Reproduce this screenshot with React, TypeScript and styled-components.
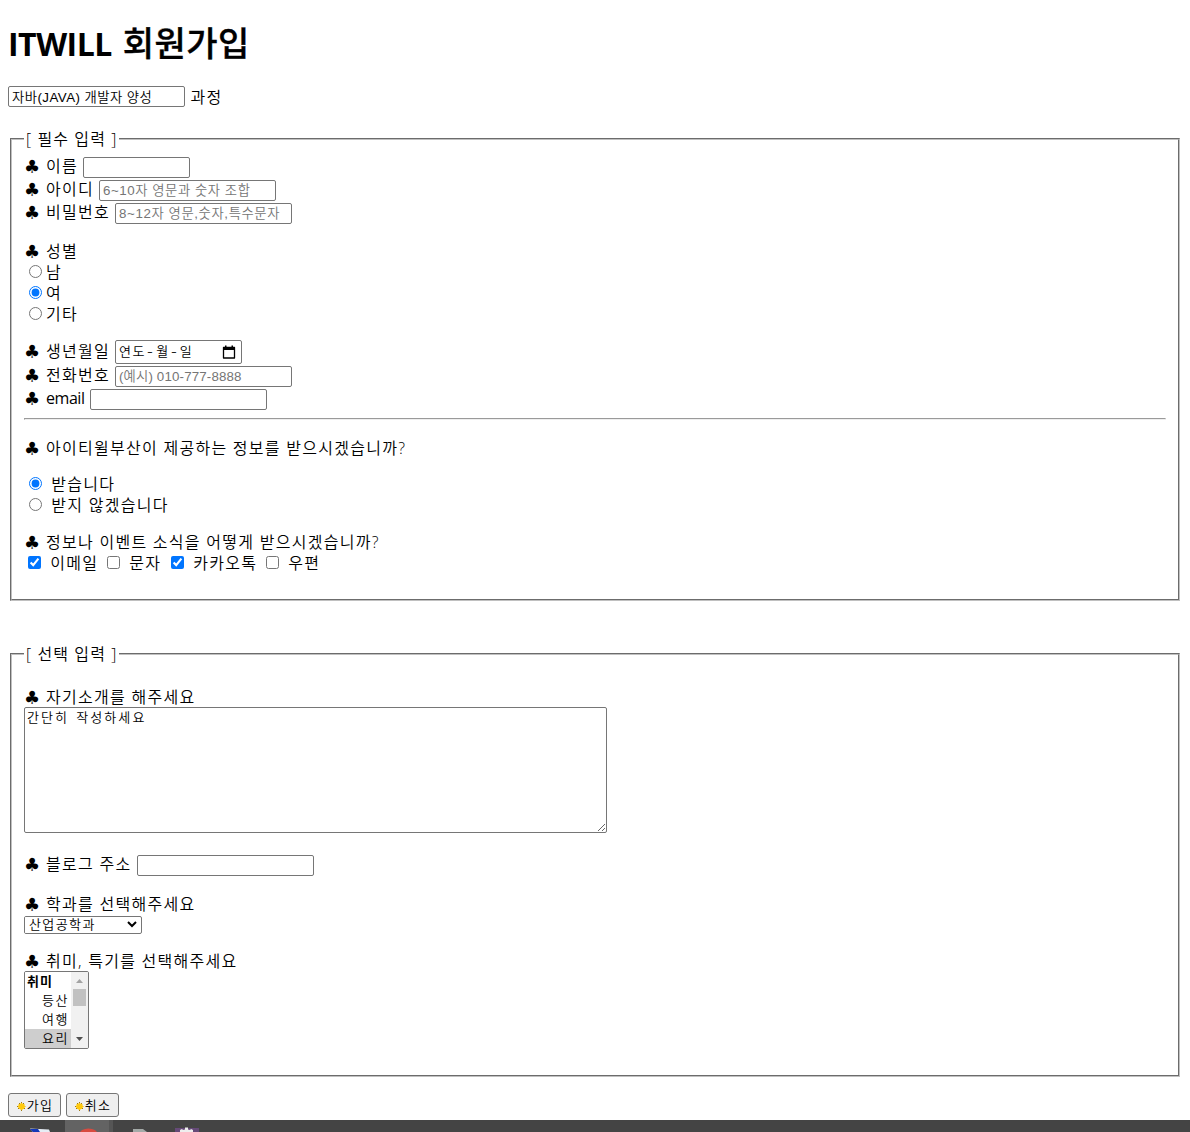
import React from "react";
import styled, { createGlobalStyle } from "styled-components";

const GlobalStyle = createGlobalStyle`
  * { box-sizing: border-box; }
  html, body { margin: 0; padding: 0; background: #fff; }
  body { overflow: hidden; }
`;

const korean = `"Noto Sans CJK KR", sans-serif`;

const Page = styled.div`
  width: 1190px;
  height: 1132px;
  display: flex;
  flex-direction: column;
  overflow: hidden;
  color: #000;
  font: 350 16px/21px "Open Sans", ${korean};
  letter-spacing: 1.28px;
  white-space: nowrap;
`;

const Form = styled.form`
  display: flex;
  flex-direction: column;
  height: 1120px;
  padding: 0 8px;
`;

const Title = styled.h1`
  height: 86px;
  margin: 0;
  padding-top: 22px;
  font: 700 32px/43px "Open Sans", ${korean};
  letter-spacing: -0.5px;
  span { margin-left: 3px; letter-spacing: 0.5px; font-size: 34px; font-weight: 500; -webkit-text-stroke: 0.4px #000; }
`;

const Row = styled.div<{ $h?: number; $gap?: number; $pad?: number }>`
  display: flex;
  align-items: center;
  height: ${(p) => p.$h ?? 21}px;
  margin-top: ${(p) => p.$gap ?? 0}px;
  padding-left: ${(p) => p.$pad ?? 0}px;
`;

const Field = styled.input<{ $w?: number; $ls?: number }>`
  width: ${(p) => p.$w ?? 177}px;
  height: 21px;
  padding: 1px 3px;
  border: 1px solid #767676;
  border-radius: 2px;
  outline: none;
  background: #fff;
  color: #000;
  font: 350 13.33px "Liberation Sans", ${korean};
  letter-spacing: ${(p) => p.$ls ?? 0}px;
  &::placeholder { color: #757575; }
`;

const Label = styled.span<{ $w?: number; $ls?: number; $up?: boolean; $latin?: boolean }>`
  flex: none;
  width: ${(p) => (p.$w ? `${p.$w}px` : "auto")};
  padding: ${(p) => (p.$up ? "0 0 2px" : "1px 0 0")};
  font-weight: ${(p) => (p.$latin ? 400 : 350)};
  letter-spacing: ${(p) => p.$ls ?? 1.28}px;
`;

const ClubMark = styled.span<{ $up?: boolean }>`
  flex: none;
  width: 22px;
  padding: ${(p) => (p.$up ? "0 0 2px" : "1px 0 0")};
  font: 18px/21px "DejaVu Sans", sans-serif;
  letter-spacing: 0;
`;

const Group = styled.fieldset<{ $gap?: number }>`
  min-width: 0;
  margin: ${(p) => p.$gap ?? 0}px 2px 0;
  padding: 0 12px 26px;
  border: 2px groove #c0c0c0;
`;

const Legend = styled.legend`
  height: 22px;
  width: 95px;
  padding: 0 2px;
  line-height: 23px;
  letter-spacing: 1.1px;
`;

const Choice = styled.input`
  flex: none;
  width: 13px;
  height: 13px;
  margin: 0 1px 0 0;
`;

const DateBox = styled.div`
  display: flex;
  align-items: center;
  justify-content: space-between;
  width: 127px;
  height: 24px;
  padding: 0 5px 0 3px;
  border: 1px solid #767676;
  border-radius: 2px;
  font: 350 13px/20px ${korean};
  letter-spacing: 1.6px;
`;

const DateParts = styled.span`
  display: flex;
  gap: 1px;
  padding-bottom: 2px;
`;

const Dash = styled.span`
  width: 8px;
  padding-left: 1px;
  transform: scaleX(1.3);
`;

const Rule = styled.hr`
  height: 2px;
  margin: 7px 0 0;
  border: 1px solid;
  border-color: #9a9a9a #eee #eee #9a9a9a;
`;

const Intro = styled.textarea`
  display: block;
  width: 583px;
  height: 126px;
  margin: 0;
  padding: 0 2px;
  border: 1px solid #767676;
  border-radius: 2px;
  outline: none;
  resize: both;
  font: 350 13px/17px ${korean};
  letter-spacing: 2.1px;
  word-spacing: 2px;
`;

const MajorFrame = styled.div`
  display: flex;
  align-items: center;
  width: 118px;
  height: 18px;
  margin-top: 2px;
  border: 1px solid #767676;
  border-radius: 2px;
  overflow: hidden;
`;

const Major = styled.select`
  flex: none;
  width: 115px;
  height: 26px;
  margin-bottom: 3px;
  padding: 0;
  border: 0;
  outline: none;
  background: #fff;
  color: #000;
  font: 350 13px ${korean};
  letter-spacing: 1.4px;
`;

const ListBox = styled.div`
  display: flex;
  width: 65px;
  height: 78px;
  border: 1px solid #767676;
  border-radius: 2px;
  overflow: hidden;
`;

const Options = styled.div`
  width: 46px;
`;

const Option = styled.div<{ $head?: boolean; $on?: boolean }>`
  height: 19px;
  padding-left: ${(p) => (p.$head ? 2 : 17)}px;
  background: ${(p) => (p.$on ? "#cecece" : "#fff")};
  font: ${(p) => (p.$head ? 700 : 350)} 13px/18px ${korean};
  letter-spacing: ${(p) => (p.$head ? 1 : 1.6)}px;
`;

const Track = styled.div`
  display: flex;
  flex-direction: column;
  align-items: center;
  width: 17px;
  background: #f1f1f1;
`;

const Thumb = styled.div`
  width: 13px;
  height: 17px;
  margin-bottom: auto;
  background: #c1c1c1;
`;

const Buttons = styled.div`
  display: flex;
  gap: 5px;
  margin-top: 16px;
`;

const Action = styled.button`
  display: flex;
  align-items: center;
  justify-content: center;
  width: 53px;
  height: 24px;
  padding: 0;
  border: 1px solid #767676;
  border-radius: 3px;
  background: #efefef;
  color: #000;
  font: 350 13px/20px ${korean};
  letter-spacing: 1.4px;
  svg { margin: 2px 1px 0 1px; }
`;

const Taskbar = styled.div`
  display: flex;
  height: 12px;
  background: #444;
`;

const TaskSlot = styled.div<{ $w: number; $active?: boolean }>`
  display: flex;
  flex: none;
  width: ${(p) => p.$w}px;
  background: ${(p) => (p.$active ? "#636363" : "transparent")};
`;

const Club = ({ up }: { up?: boolean }) => <ClubMark $up={up}>♣</ClubMark>;

const Spark = () => (
  <svg width="9" height="9" viewBox="0 0 9 9">
    <path d="M4.500.5 6 2h1.500v1.500L9 4.500 7.500 5.500V7H6L4.500 8.500 3 7H1.500V5.500L0 4.500 1.500 3.500V2H3Z" fill="#ffc90e" />
    <path d="M4 0h1v1H4ZM2 1h1v1H2ZM6 1h1v1H6ZM0 4h1v1H0ZM1 6h1v1H1ZM7 6h1v1H7ZM4 8h1v1H4Z" fill="#a07c18" />
  </svg>
);

const Calendar = () => (
  <svg width="14" height="14" viewBox="0 0 14 14">
    <path d="M1.500 2.500h11v10.500h-11Z" fill="none" stroke="#000" strokeWidth="1.3" strokeLinejoin="round" />
    <path d="M1 2h12v3H1ZM3 .5h1.500v2H3ZM9.500.5H11v2H9.500Z" />
  </svg>
);

const Arrow = ({ up }: { up?: boolean }) => (
  <svg width="17" height="17" viewBox="0 0 17 17">
    <path d={up ? "M5 11 8.5 7 12 11Z" : "M5 6 8.5 10 12 6Z"} fill={up ? "#a3a3a3" : "#505050"} />
  </svg>
);

export default function App() {
  return (
    <Page>
      <GlobalStyle />
      <Form onSubmit={(e) => e.preventDefault()}>
        <Title>ITWILL <span>회원가입</span></Title>
        <Row>
          <Field defaultValue="자바(JAVA) 개발자 양성" $ls={0.45} />
          <Label>&nbsp;과정</Label>
        </Row>

        <Group $gap={21}>
          <Legend>[ 필수 입력 ]</Legend>
          <Row $h={23} $gap={6}><Club up /><Label $w={37} $up>이름</Label><Field $w={107} /></Row>
          <Row $h={23}><Club up /><Label $w={53} $up>아이디</Label><Field placeholder="6~10자 영문과 숫자 조합" $ls={0.55} /></Row>
          <Row $h={23}><Club up /><Label $w={69} $up>비밀번호</Label><Field placeholder="8~12자 영문,숫자,특수문자" $ls={0.6} /></Row>

          <Row $gap={15}><Club /><Label>성별</Label></Row>
          <Row $pad={5}><Choice type="radio" name="gender" /><Label>&#8202;남</Label></Row>
          <Row $pad={5}><Choice type="radio" name="gender" defaultChecked /><Label>&#8202;여</Label></Row>
          <Row $pad={5}><Choice type="radio" name="gender" /><Label>&#8202;기타</Label></Row>

          <Row $h={26} $gap={15}>
            <Club up /><Label $w={69} $up>생년월일</Label>
            <DateBox><DateParts><span>연도</span><Dash>-</Dash><span>월</span><Dash>-</Dash><span>일</span></DateParts><Calendar /></DateBox>
          </Row>
          <Row $h={23}><Club up /><Label $w={69} $up>전화번호</Label><Field placeholder="(예시) 010-777-8888" $ls={0.15} /></Row>
          <Row $h={23}><Club up /><Label $w={44} $ls={-0.45} $up $latin>email</Label><Field /></Row>
          <Rule />

          <Row $gap={17}><Club /><Label>아이티윌부산이 제공하는 정보를 받으시겠습니까?</Label></Row>
          <Row $gap={15} $pad={5}><Choice type="radio" name="news" defaultChecked /><Label>&nbsp;&#8202;받습니다</Label></Row>
          <Row $pad={5}><Choice type="radio" name="news" /><Label>&nbsp;&#8202;받지 않겠습니다</Label></Row>

          <Row $gap={16}><Club /><Label>정보나 이벤트 소식을 어떻게 받으시겠습니까?</Label></Row>
          <Row $pad={4}>
            <Choice type="checkbox" defaultChecked /><Label $w={65}>&nbsp;&#8202;이메일</Label>
            <Choice type="checkbox" /><Label $w={50}>&nbsp;&#8202;문자</Label>
            <Choice type="checkbox" defaultChecked /><Label $w={81}>&nbsp;&#8202;카카오톡</Label>
            <Choice type="checkbox" /><Label>&nbsp;&#8202;우편</Label>
          </Row>
        </Group>

        <Group $gap={42}>
          <Legend>[ 선택 입력 ]</Legend>
          <Row $gap={21}><Club /><Label>자기소개를 해주세요</Label></Row>
          <Intro defaultValue="간단히 작성하세요" />
          <Row $h={23} $gap={21}><Club up /><Label $w={91} $up>블로그 주소</Label><Field /></Row>
          <Row $gap={16}><Club /><Label>학과를 선택해주세요</Label></Row>
          <MajorFrame>
            <Major defaultValue="산업공학과"><option>산업공학과</option></Major>
          </MajorFrame>
          <Row $gap={16}><Club /><Label>취미, 특기를 선택해주세요</Label></Row>
          <ListBox>
            <Options>
              <Option $head>취미</Option>
              <Option>등산</Option>
              <Option>여행</Option>
              <Option $on>요리</Option>
            </Options>
            <Track><Arrow up /><Thumb /><Arrow /></Track>
          </ListBox>
        </Group>

        <Buttons>
          <Action><Spark />가입</Action>
          <Action><Spark />취소</Action>
        </Buttons>
      </Form>
      <Taskbar>
        <TaskSlot $w={65}><svg width="65" height="12"><path d="M30 8.500 49 9.500 50 12H33Z" fill="#e6edf5" /><path d="M30 9h8l2 3h-7Z" fill="#1438b8" /></svg></TaskSlot>
        <TaskSlot $w={44} $active><svg width="44" height="12"><ellipse cx="23.5" cy="14" rx="9" ry="5.5" fill="#d84b40" /></svg></TaskSlot>
        <TaskSlot $w={56}><svg width="56" height="12"><path d="M0 0h4v12H0Z" fill="#555" /><path d="M24 9h10l4 3H24Z" fill="#a4aaa8" /></svg></TaskSlot>
        <TaskSlot $w={44}><svg width="44" height="12"><path d="M10 8h24v4H10Z" fill="#664a78" /><path d="M15 12v-2l2-1 1 1 2-.5V7.500h3V9.500l2 .5 1-1 2 1v2Z" fill="#eee" /></svg></TaskSlot>
      </Taskbar>
    </Page>
  );
}
